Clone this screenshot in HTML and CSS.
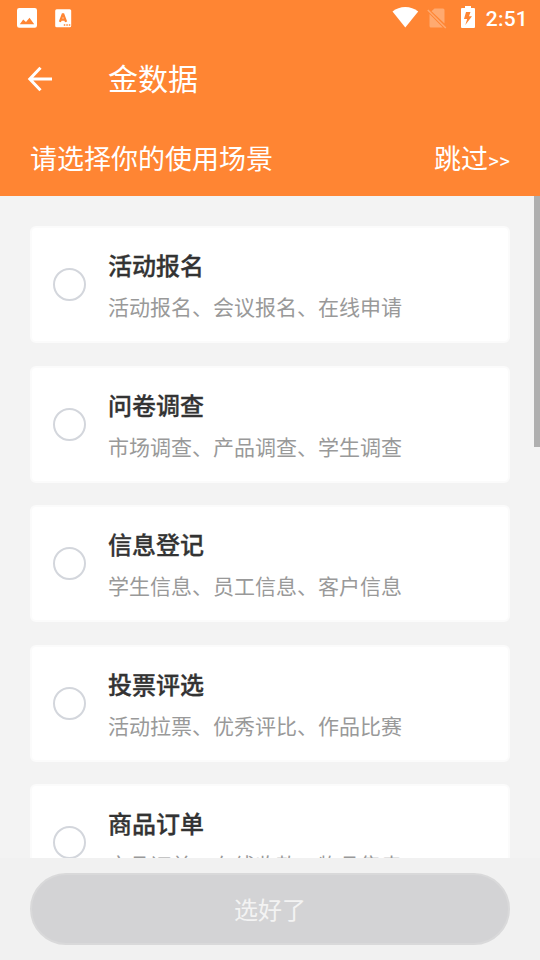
FILE: index.html
```
<!DOCTYPE html>
<html lang="zh-CN">
<head>
<meta charset="utf-8">
<title>金数据</title>
<link rel="stylesheet" href="styles.css">
</head>
<body>
<div class="app">
  <header class="header">
    <div class="status">
      <div class="status-left">
        <svg width="20" height="20" viewBox="0 0 20 20"><path fill="#fff" fill-rule="evenodd" d="M2.200 0H17.800Q20 0 20 2.200V17.500Q20 19.700 17.800 19.700H2.200Q0 19.700 0 17.500V2.200Q0 0 2.200 0ZM2.800 16.200H17.200L12.500 9.700L9 14L6.200 11.500Z"/></svg>
        <svg width="17" height="19" viewBox="0 0 17 19"><rect width="16" height="18" x=".2" y=".2" rx="1.500" fill="#fff"/><path d="M4.900 12.800L8 4.600L11.100 12.800M5.900 10.600H10.200" fill="none" stroke="#ff8533" stroke-width="2.300" stroke-linejoin="bevel"/><path d="M8.800 15.900h1.500m1 0h1.500m1 0h1.500" stroke="#ff8533" stroke-width="1.500"/></svg>
      </div>
      <div class="status-right">
        <svg class="wifi" width="27" height="21" viewBox="0 0 27 21"><path fill="#fff" d="M.5 4.500Q6 0 13.300 0T26.200 4.500L13.300 20.500Z"/></svg>
        <svg class="sim" width="20" height="21" viewBox="0 0 20 21"><path fill="#ffaa70" d="M7.500.5H16Q17.500.5 17.500 2V15.500L4.500 3.200ZM2.500 6L15.800 19.500H4Q2.500 19.500 2.500 18Z"/><path d="M.8 2L18.800 20" stroke="#ffaa70" stroke-width="1.500"/></svg>
        <svg class="battery" width="14" height="22" viewBox="0 0 14 22"><path fill="#fff" fill-rule="evenodd" d="M4 0H10V2H13Q14 2 14 3V21Q14 22 13 22H1Q0 22 0 21V3Q0 2 1 2H4ZM9.500 6H5L3 13H6.200L4.300 19L11 10.200H8Z"/></svg>
        <span class="time">2:51</span>
      </div>
    </div>
    <div class="navbar">
      <svg class="back" width="26" height="26" viewBox="0 0 26 26"><path d="M13.500 1.700L2.800 13L13.500 24.300M2.800 13H25" fill="none" stroke="#fff" stroke-width="3"/></svg>
      <h1 class="title">金数据</h1>
    </div>
    <div class="prompt"><span>请选择你的使用场景</span><span class="skip">跳过<span class="arrows">&gt;&gt;</span></span></div>
  </header>
  <main class="list">
    <div class="scrollbar"></div>
    <section class="card"><i class="radio"></i><div class="text"><h2>活动报名</h2><p>活动报名、会议报名、在线申请</p></div></section>
    <section class="card"><i class="radio"></i><div class="text"><h2>问卷调查</h2><p>市场调查、产品调查、学生调查</p></div></section>
    <section class="card"><i class="radio"></i><div class="text"><h2>信息登记</h2><p>学生信息、员工信息、客户信息</p></div></section>
    <section class="card"><i class="radio"></i><div class="text"><h2>投票评选</h2><p>活动拉票、优秀评比、作品比赛</p></div></section>
    <section class="card"><i class="radio"></i><div class="text"><h2>商品订单</h2><p>产品订单、在线收款、物品售卖</p></div></section>
  </main>
  <footer class="footer"><button class="done">选好了</button></footer>
</div>
</body>
</html>
```
FILE: styles.css
```
* { box-sizing: border-box; margin: 0; padding: 0; }
body {
  width: 540px;
  height: 960px;
  overflow: hidden;
  font-family: Roboto, "Noto Sans CJK SC", sans-serif;
  background: #f3f3f3;
}
svg { display: block; }
.app { display: flex; flex-direction: column; height: 960px; }
.header { height: 196px; flex: none; background: #ff8533; color: #fff; }
.status { display: flex; justify-content: space-between; height: 36px; padding: 0 12px 0 17px; }
.status-left { display: flex; gap: 18px; padding-top: 8px; }
.status-left svg:last-child { margin-top: 1px; }
.status-right { display: flex; align-items: flex-start; }
.wifi { margin: 7px 8px 0 0; }
.sim { margin: 8px 14px 0 0; }
.battery { margin: 6px 11px 0 0; }
.time { font-size: 21px; font-weight: 500; line-height: 38px; letter-spacing: .2px; }
.navbar { display: flex; align-items: center; height: 86px; padding-left: 27px; }
.title { margin-left: 55px; padding-top: 1px; font-size: 30px; font-weight: 400; line-height: 44px; }
.prompt { display: flex; justify-content: space-between; height: 74px; padding: 0 30px; font-size: 27px; line-height: 76px; }
.arrows { position: relative; top: -1px; font-size: 21px; }
.list { position: relative; display: flex; flex-direction: column; gap: 22.500px; height: 662px; padding: 30px 30px 0; overflow: hidden; }
.scrollbar { position: absolute; top: 0; right: 0; width: 6px; height: 251px; background: #afafaf; }
.card { display: flex; align-items: center; flex: none; height: 117px; padding-left: 21px; background: #fff; border: 2px solid #fbfbfb; border-radius: 6px; }
.radio { width: 33px; height: 33px; border: 2px solid #d3d6dc; border-radius: 50%; }
.text { margin-left: 22px; padding-top: 6px; }
h2 { font-size: 24px; font-weight: 500; line-height: 36px; color: #333; -webkit-text-stroke: .3px #333; }
p { margin-top: 5px; font-size: 21px; line-height: 36px; color: #999; }
.footer { flex: 1; padding: 15px 30px; background: #f1f1f1; }
.done { display: block; width: 480px; height: 72px; padding-top: 4px; border: 2px solid #d9d9da; border-radius: 36px; background: #d3d3d5; color: #f3f3f3; font: 24px/64px Roboto, "Noto Sans CJK SC", sans-serif; }
```
